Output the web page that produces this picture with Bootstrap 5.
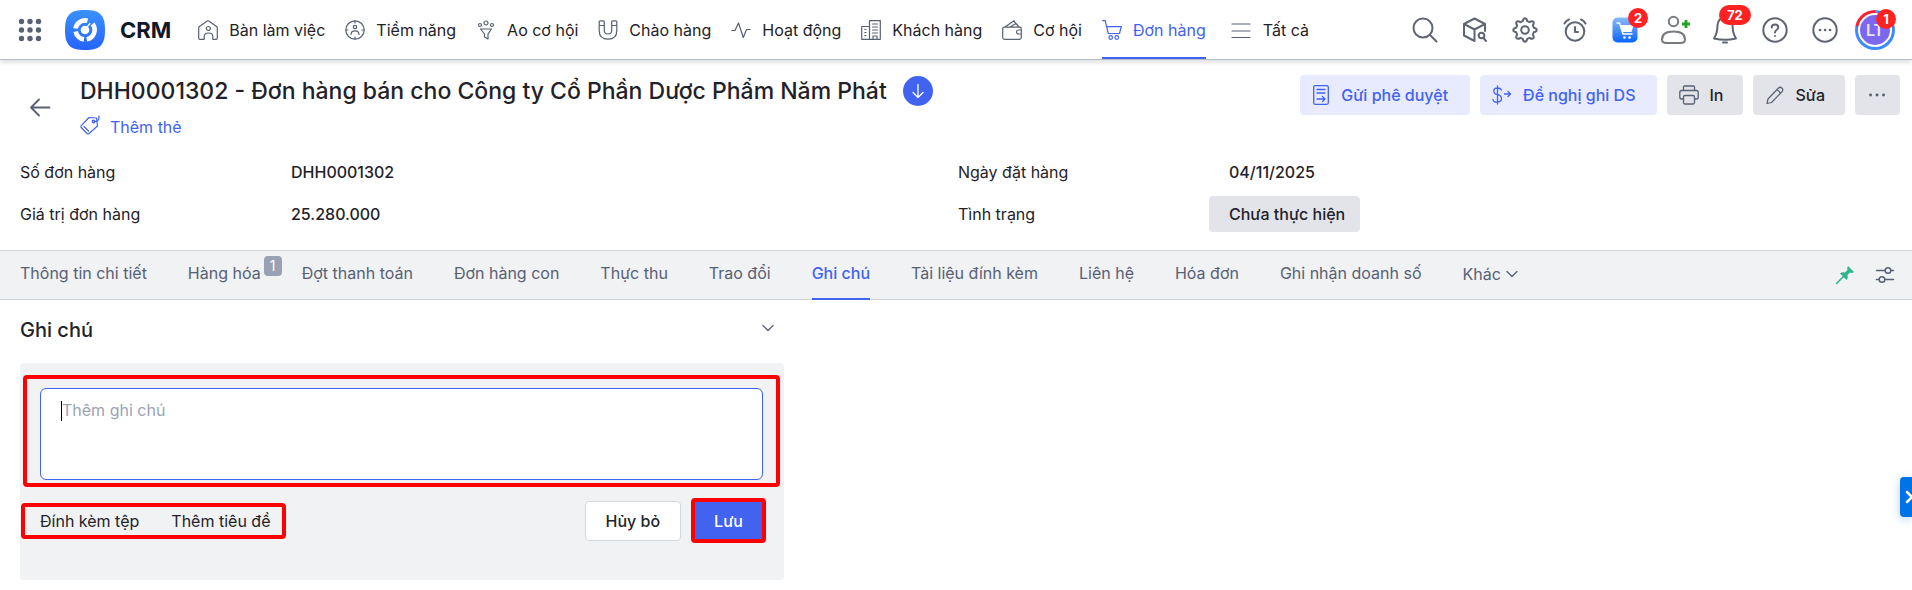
<!DOCTYPE html>
<html lang="vi">
<head>
<meta charset="utf-8">
<meta name="viewport" content="width=device-width, initial-scale=1">
<title>CRM - Đơn hàng</title>
<link href="https://cdn.jsdelivr.net/npm/bootstrap@5.3.0/dist/css/bootstrap.min.css" rel="stylesheet">
<style>
:root{--ink:#1f2229;--muted:#586074;--brand:#4262f0;--soft:#e7ebfd;--gray:#e2e4e9;--band:#f0f2f4}
body{font-family:Inter,"Noto Sans",sans-serif;font-size:16px;line-height:24px;color:var(--ink);background:#fff;overflow-x:hidden}
svg{display:block;flex:none;fill:none;stroke:currentColor;stroke-linecap:round;stroke-linejoin:round}
a{text-decoration:none;color:inherit}
.btn{--bs-btn-font-size:16px;--bs-btn-line-height:24px;--bs-btn-border-radius:4px}
.topbar{height:60px;border-bottom:1px solid #b9bccb;box-shadow:0 2px 5px rgba(60,65,85,.2)}
.app-menu{gap:23px;padding-left:18px}
.app-menu .btn{color:var(--muted)}
.brand-link{gap:15px}
.brand-name{font-size:22px;font-weight:700;line-height:28px;color:#111827}
.main-nav{gap:20px}
.main-nav .nav-link{display:flex;align-items:center;gap:11px;height:59px;padding:0;color:var(--ink);border-bottom:2px solid transparent;border-top:2px solid transparent;white-space:nowrap}
.main-nav svg{color:var(--muted);stroke-width:1.2}
.main-nav .active,.main-nav .active svg{color:var(--brand)}
.main-nav .active{border-bottom-color:var(--brand)}
.tools{gap:24px;color:#5f6573;padding-right:20px}
.tool{width:26px;height:26px;padding:0;border:0;background:none;color:inherit;position:relative;display:flex;align-items:center;justify-content:center}
.tool svg{stroke-width:2}
.count{position:absolute;height:20px;min-width:20px;border-radius:10px;background:#f22;color:#fff;font-size:13px;font-weight:700;line-height:20px;text-align:center}
.count-cart{left:16px;top:-9px}
.count-bell{left:7px;top:-12px}
.count-user{right:-1px;top:-1px}
.avatar{width:40px;height:40px;border-radius:50%;background:conic-gradient(#3d8bff 0 78%,#f5222d 78%);margin:0 -3px 0 -7px}
.avatar .face{width:34px;height:34px;border-radius:50%;border:2px solid #fff;background:#7b68ee;color:#e9e6ff;font-size:16px;font-weight:600;line-height:30px}
.order-head{padding:15px 12px 18px 20px}
.back-link{padding:0 8px;margin-right:20px;color:var(--muted)}
.order-title{font-size:23px;font-weight:500;line-height:32px}
.btn-round{width:30px;height:30px;background:var(--brand);color:#fff}
.brand-text{color:var(--brand);gap:10px}
.actions{gap:10px}
.actions .btn{height:40px;display:flex;align-items:center;gap:10px;padding:0 20px 0 12px;font-weight:500;white-space:nowrap;border:0}
.actions .btn-soft{background:var(--soft);color:var(--brand);gap:11px;padding-right:22px}
.btn-gray{background:var(--gray);color:var(--ink)}
.btn-gray svg{color:var(--muted)}
.actions .more{padding:0 13px 0 12px}
.fields{row-gap:6px;margin:15px 4px 0 0}
.field-row{height:36px}
.field-name{width:271px}
.field-value{font-weight:500}
.status-pill{background:var(--gray);border-radius:4px;padding:6px 15px 6px 20px;margin-left:-20px}
.tab-band{height:50px;background:var(--band);border-top:1px solid #d0d4dc;border-bottom:1px solid #d0d4dc;padding:0 17px 0 20px}
.tab-list{gap:41px;color:var(--muted)}
.tab-list .nav-link{padding:0;height:50px;line-height:46px;color:inherit;border-bottom:2px solid transparent;position:relative;white-space:nowrap}
.tab-list .active{color:var(--brand);border-bottom-color:var(--brand);font-weight:500}
.tab-count{position:absolute;left:100%;top:6px;margin-left:3px;width:18px;height:20px;border-radius:4px;background:#99a1b2;color:#fff;font-size:14px;line-height:20px;text-align:center}
.tab-tools{gap:20px;color:var(--muted)}
.tab-tools .btn{color:inherit}
.tab-tools .pin{color:#2fb58c}
.notes{width:41%;padding-left:20px}
.notes-head{padding:16px 9px 19px 0}
.notes-head .btn{color:var(--muted)}
.notes h2{font-size:20px;font-weight:500;line-height:28px}
.note-card{background:var(--band);border-radius:4px;padding:12px 4px 37px 1px}
.marked{border:4px solid #f00;border-radius:4px}
.note-box{padding:9px 13px 3px;margin-left:2px}
.note-box textarea{height:92px;resize:none;border:1px solid var(--brand);border-radius:6px;padding:9px 21px;font-size:16px;line-height:24px}
.note-box textarea::placeholder{color:#9ca3b4}
.caret{position:absolute;left:21px;top:13px;width:1px;height:20px;background:#000}
.note-actions{margin:11px 14px 0 0}
.note-links{padding:2px 12px 2px 15px;gap:32px;height:36px}
.note-links .btn{padding:0;border:0;color:var(--ink)}
.save-group{gap:10px}
.btn-cancel{height:40px;padding:0 20px;border:1px solid #d3d7de;background:#fff;font-weight:500}
.btn-save{height:37px;padding:0 19px;border:0;background:var(--brand);color:#fff;font-weight:500;border-radius:0}
.side-handle{position:fixed;right:0;top:477px;width:12px;height:40px;padding:0;border:0;border-radius:4px 0 0 4px;background:#0073e6;color:#fff;box-shadow:0 2px 10px rgba(0,115,230,.3);overflow:hidden}
</style>
</head>
<body>
<header class="topbar d-flex align-items-center justify-content-between">
  <div class="app-menu d-flex align-items-center">
    <button class="btn p-0 border-0" aria-label="Ứng dụng"><svg width="24" height="24" viewBox="0 0 24 24"><g fill="currentColor" stroke="none"><circle cx="3.500" cy="3.500" r="2.700"/><circle cx="12" cy="3.500" r="2.700"/><circle cx="20.500" cy="3.500" r="2.700"/><circle cx="3.500" cy="12" r="2.700"/><circle cx="12" cy="12" r="2.700"/><circle cx="20.500" cy="12" r="2.700"/><circle cx="3.500" cy="20.500" r="2.700"/><circle cx="12" cy="20.500" r="2.700"/><circle cx="20.500" cy="20.500" r="2.700"/></g></svg></button>
    <a href="#" class="brand-link d-flex align-items-center"><svg width="40" height="40" viewBox="0 0 40 40"><defs><linearGradient id="lg" x1="0" y1="0" x2="0" y2="1"><stop stop-color="#3a92ff"/><stop offset="1" stop-color="#2563ff"/></linearGradient></defs><path d="M20 0C35 0 40 5 40 20S35 40 20 40 0 35 0 20 5 0 20 0Z" fill="url(#lg)" stroke="none"/><g stroke="#fff" stroke-width="4.600" stroke-linecap="butt"><path d="M10.600 18.500A9.600 9.600 0 0 1 22.500 10.700"/><path d="M27.600 14A9.600 9.600 0 0 1 21.700 29.300"/><path d="M19 29.400A9.600 9.600 0 0 1 10.700 21.500"/></g><circle cx="20" cy="20" r="4.300" fill="#fff" stroke="none"/><path d="M22.500 16.500 25 13.500" stroke="#fff" stroke-width="1.200"/></svg><span class="brand-name">CRM</span></a>
    <nav class="nav main-nav ps-1 flex-nowrap">
      <a class="nav-link" href="#"><svg width="20" height="20" viewBox="0 0 20 20"><path d="M3.500 19.300H1.800Q.7 19.300.7 18V7.800Q.7 7 1.500 6.400L9.200 1Q10 .5 10.800 1L18.500 6.400Q19.300 7 19.300 7.800V18Q19.300 19.300 18.200 19.300H14.800V16.500Q14.800 13 10.500 13 6.200 13 6.200 16.500V19.300H3.500"/><circle cx="10.300" cy="8.500" r="2"/></svg>Bàn làm việc</a>
      <a class="nav-link" href="#"><svg width="20" height="20" viewBox="0 0 20 20"><circle cx="10" cy="10" r="9.200"/><circle cx="10" cy="7" r="1.700"/><path d="M6 14.500Q6 10.800 10 10.800T14 14.500M10 .8V3M10 17V19.200M.8 10H3M17 10H19.200"/></svg>Tiềm năng</a>
      <a class="nav-link" href="#"><svg width="20" height="20" viewBox="0 0 20 20"><circle cx="4" cy="5" r="1.500"/><circle cx="10" cy="3" r="2"/><circle cx="16" cy="5" r="1.500"/><path d="M4.500 9H15.500L12 14V19L8.500 17V14Z"/></svg>Ao cơ hội</a>
      <a class="nav-link" href="#"><svg width="20" height="20" viewBox="0 0 20 20"><path d="M1.200 1.800Q1.200.8 2.200.8H5.300Q6.300.8 6.300 1.800V10.500Q6.300 14 10 14T13.700 10.500V1.800Q13.700.8 14.700.8H17.800Q18.800.8 18.800 1.800V10.500Q18.800 19.200 10 19.200T1.200 10.500ZM1.200 5.500H6.300M13.700 5.500H18.800"/></svg>Chào hàng</a>
      <a class="nav-link" href="#"><svg width="20" height="20" viewBox="0 0 20 20"><path d="M.8 10.500H4L7.500 3 12.300 17.500 15.500 9.500H19.200"/></svg>Hoạt động</a>
      <a class="nav-link" href="#"><svg width="20" height="20" viewBox="0 0 20 20" ><path d="M8.500 19.300V.7H19.300V19.300H.7V6.500H8.500M3.800 9.500H5M3.800 12.500H5M3.800 15.500H5M11.500 4H16.500M11.500 7H16.500M11.500 10H16.500M11.500 13H16.500M12 19V16H16V19"/></svg>Khách hàng</a>
      <a class="nav-link" href="#"><svg width="20" height="20" viewBox="0 0 20 20"><path d="M16.500 7.200H2.500Q.7 7.200.7 9V17.500Q.7 19.300 2.500 19.300H17.500Q19.300 19.300 19.300 17.500V9Q19.300 7.200 17.500 7.200M19.300 10H16.500Q14.500 10 14.500 12T16.500 14H19.300M3 7 12 .8 14.500 4.500M8 7 14 3.500 17 7"/></svg>Cơ hội</a>
      <a class="nav-link active" href="#" aria-current="page"><svg width="20" height="20" viewBox="0 0 20 20"><path d="M.7.7H3.200L6.300 13.500H17.500L19.300 6.700H4.700"/><circle cx="8.700" cy="17.500" r="1.800"/><circle cx="14.800" cy="17.500" r="1.800"/></svg>Đơn hàng</a>
      <a class="nav-link ms-1" href="#"><svg width="22" height="20" viewBox="0 0 22 20"><path d="M2 4H20M2 11H20M2 17.500H20"/></svg>Tất cả</a>
    </nav>
  </div>
  <div class="tools d-flex align-items-center">
    <button class="tool" aria-label="Tìm kiếm"><svg width="26" height="26" viewBox="0 0 26 26"><circle cx="11" cy="11" r="9.500"/><path d="M18 18 24.500 24.500"/></svg></button>
    <button class="tool" aria-label="Sản phẩm"><svg width="26" height="26" viewBox="0 0 26 26"><path d="M12.500 24 2 18.500V7L12.500 1.500 23 7V14M2 7 12.500 12.500 23 7M12.500 12.500V24"/><circle cx="19.500" cy="18.500" r="2.800"/><path d="M21.500 21 24 24"/></svg></button>
    <button class="tool" aria-label="Thiết lập"><svg width="26" height="26" viewBox="0 0 26 26"><path d="M10.700 4.200Q11.300 1.300 13 1.300T15.300 4.200L17.600 5.200Q20.100 3.500 21.300 4.700T20.800 8.400L21.800 10.700Q24.700 11.300 24.700 13T21.800 15.300L20.800 17.600Q22.500 20.100 21.300 21.300T17.600 20.800L15.300 21.800Q14.700 24.700 13 24.700T10.700 21.800L8.400 20.800Q5.900 22.500 4.700 21.300T5.200 17.600L4.200 15.300Q1.300 14.700 1.300 13T4.200 10.700L5.200 8.400Q3.500 5.900 4.700 4.700T8.400 5.200Z"/><circle cx="13" cy="13" r="3.800"/></svg></button>
    <button class="tool" aria-label="Nhắc nhở"><svg width="26" height="26" viewBox="0 0 26 26"><circle cx="13" cy="14.500" r="9.300"/><path d="M13 10V15H16M2.500 6.500Q4 3.500 7 2.500M23.500 6.500Q22 3.500 19 2.500"/></svg></button>
    <button class="tool" aria-label="Giỏ hàng"><svg width="26" height="26" viewBox="0 0 26 26"><defs><linearGradient id="cg" x1="0" y1="0" x2="0" y2="1"><stop stop-color="#8abaff"/><stop offset="1" stop-color="#0a64fa"/></linearGradient></defs><rect x=".5" y=".5" width="25" height="25" rx="5" fill="url(#cg)" stroke="none"/><path d="M5 6H7.500L11 17H20" stroke="#fff" stroke-width="1.500"/><path d="M8.500 8H21.500L19.500 15H10.500Z" fill="#fff" stroke="none"/><circle cx="12.500" cy="20.500" r="1.300" fill="#fff" stroke="none"/><circle cx="17.500" cy="20.500" r="1.300" fill="#fff" stroke="none"/></svg><span class="count count-cart">2</span></button>
    <button class="tool" aria-label="Thêm người dùng"><svg width="30" height="30" viewBox="-1 0 30 30"><g stroke="#777b80"><circle cx="12.500" cy="6.500" r="4.700"/><path d="M5.500 28Q1 28 1 24.500 1 16.500 12.500 16.500T24 24.500Q24 28 19.500 28Z"/></g><path d="M25 5V13M21 9H29" stroke="#22a51e" stroke-width="2.800" stroke-linecap="butt"/></svg></button>
    <button class="tool" aria-label="Thông báo"><svg width="26" height="28" viewBox="0 0 26 28"><path d="M13 2Q6 2 5.500 9 5.500 17 2 22.500 13 25 24 22.500 20.500 17 20.500 9 20 2 13 2Z"/><path d="M11 26.500H15"/></svg><span class="count count-bell px-2">72</span></button>
    <button class="tool" aria-label="Trợ giúp"><svg width="26" height="26" viewBox="0 0 26 26"><circle cx="13" cy="13" r="11.700"/><path d="M9.700 10.500Q9.700 7.500 13 7.500T16.300 10.300Q16.300 12 14.500 13 13 13.800 13 15.500M13 19V19.100"/></svg></button>
    <button class="tool" aria-label="Thêm"><svg width="26" height="26" viewBox="0 0 26 26"><circle cx="13" cy="13" r="11.700"/><path d="M8 13H8.100M13 13H13.100M18 13H18.100" stroke-width="2.600"/></svg></button>
    <button class="tool avatar" aria-label="Tài khoản"><span class="face">LT</span><span class="count count-user">1</span></button>
  </div>
</header>

<main>
  <section class="order-head">
    <div class="d-flex justify-content-between align-items-start">
      <div class="d-flex">
        <a href="#" class="back-link align-self-center" aria-label="Quay lại"><svg width="24" height="24" viewBox="0 0 24 24" stroke-width="1.800"><path d="M21.500 12.500H3M11 4.500 3 12.500 11 20.500"/></svg></a>
        <div>
          <div class="d-flex align-items-center gap-3"><h1 class="order-title m-0">DHH0001302 - Đơn hàng bán cho Công ty Cổ Phần Dược Phẩm Năm Phát</h1>
            <button class="btn btn-round rounded-circle p-0 border-0 d-flex align-items-center justify-content-center" aria-label="Xem thêm"><svg width="16" height="16" viewBox="0 0 16 16" stroke-width="1.300"><path d="M8 1.500V14.500M3 9.500 8 14.500 13 9.500"/></svg></button></div>
          <a href="#" class="brand-text d-flex mt-2"><svg width="20" height="20" viewBox="0 0 20 20" stroke-width="1.200"><path d="M9 2.500 16.500 3 17.500 11 9 18.500Q8 19.300 7 18.500L1.200 12.500Q.5 11.500 1.300 10.700Z"/><circle cx="13.500" cy="6.500" r="1.300"/><path d="M14 6.500Q19.500 7 19 1M4 11.500 8.500 16"/></svg>Thêm thẻ</a>
        </div>
      </div>
      <div class="actions d-flex">
        <button class="btn btn-soft"><svg width="18" height="20" viewBox="0 0 18 20" stroke-width="1.300"><rect x="1.700" y=".7" width="14.600" height="18.600" rx="1.500"/><path d="M5 4.500H13M5 8H13M5 14H13M10.500 11.500 13 14 10.500 16.500"/></svg>Gửi phê duyệt</button>
        <button class="btn btn-soft"><svg width="20" height="20" viewBox="0 0 20 20" stroke-width="1.300"><path d="M9.500 5Q8.500 3 5.500 3 1.800 3 1.800 6T5.500 9.700 9.500 13.500 5.500 17 1 14.500M5.500 1V19M12.500 9H18.500M16 6.500 18.500 9 16 11.500"/></svg>Đề nghị ghi DS</button>
        <button class="btn btn-gray"><svg width="20" height="20" viewBox="0 0 20 20" stroke-width="1.300"><path d="M4.500 5V2Q4.500 1 5.500 1H14.500Q15.500 1 15.500 2V5M4.500 14H2.500Q.8 14 .8 12V7.500Q.8 5.500 2.500 5.500H17.500Q19.200 5.500 19.200 7.500V12Q19.200 14 17.500 14H15.500"/><rect x="4.500" y="10.500" width="11" height="8.500" rx="1.500"/></svg>In</button>
        <button class="btn btn-gray"><svg width="20" height="20" viewBox="0 0 20 20" stroke-width="1.200"><path d="M2 18.500 3 14 13.500 3Q15 1.500 16.800 3T17.200 6.500L6.500 17.500ZM12 4.500 15.500 8"/></svg>Sửa</button>
        <button class="btn btn-gray more" aria-label="Thao tác khác"><svg width="20" height="20" viewBox="0 0 20 20"><path d="M3.500 10H3.600M10 10H10.100M16.500 10H16.600" stroke-width="2.800"/></svg></button>
      </div>
    </div>
    <div class="fields row gx-0">
      <div class="field-row col-6 d-flex align-items-center"><span class="field-name">Số đơn hàng</span><span class="field-value">DHH0001302</span></div>
      <div class="field-row col-6 d-flex align-items-center"><span class="field-name">Ngày đặt hàng</span><span class="field-value">04/11/2025</span></div>
      <div class="field-row col-6 d-flex align-items-center"><span class="field-name">Giá trị đơn hàng</span><span class="field-value">25.280.000</span></div>
      <div class="field-row col-6 d-flex align-items-center"><span class="field-name">Tình trạng</span><span class="field-value status-pill">Chưa thực hiện</span></div>
    </div>
  </section>

  <div class="tab-band d-flex align-items-center justify-content-between">
    <nav class="nav tab-list flex-nowrap">
      <a class="nav-link" href="#">Thông tin chi tiết</a>
      <a class="nav-link" href="#">Hàng hóa<span class="tab-count">1</span></a>
      <a class="nav-link" href="#">Đợt thanh toán</a>
      <a class="nav-link" href="#">Đơn hàng con</a>
      <a class="nav-link" href="#">Thực thu</a>
      <a class="nav-link" href="#">Trao đổi</a>
      <a class="nav-link active" href="#" aria-current="page">Ghi chú</a>
      <a class="nav-link" href="#">Tài liệu đính kèm</a>
      <a class="nav-link" href="#">Liên hệ</a>
      <a class="nav-link" href="#">Hóa đơn</a>
      <a class="nav-link" href="#">Ghi nhận doanh số</a>
      <a class="nav-link d-flex align-items-center gap-1" href="#">Khác<svg width="14" height="14" viewBox="0 0 14 14" stroke-width="1.300"><path d="M2 4.500 7 9.500 12 4.500"/></svg></a>
    </nav>
    <div class="tab-tools d-flex align-items-center">
      <button class="btn pin p-0 border-0" aria-label="Ghim"><svg width="20" height="20" viewBox="0 0 20 20"><path d="M13 1 19 7Q17 8.500 15 7.500L12.500 10Q13.500 13 11.500 15L5 8.500Q7 6.500 10 7.500L12.500 5Q11.500 3 13 1Z" fill="currentColor" stroke="none"/><path d="M8.500 11.500 1.500 18.500" stroke-width="1.500"/></svg></button>
      <button class="btn p-0 border-0" aria-label="Tùy chỉnh"><svg width="20" height="20" viewBox="0 0 20 20" stroke-width="1.500"><path d="M1.500 5.500H10M16 5.500H18.500M1.500 14.500H4M10 14.500H18.500"/><circle cx="13" cy="5.500" r="2.800"/><circle cx="7" cy="14.500" r="2.800"/></svg></button>
    </div>
  </div>

  <section class="notes">
    <div class="notes-head d-flex justify-content-between align-items-center">
      <h2 class="m-0">Ghi chú</h2>
      <button class="btn p-0 border-0" aria-label="Thu gọn"><svg width="14" height="14" viewBox="0 0 14 14" stroke-width="1.300"><path d="M2 2.500 7 7.500 12 2.500"/></svg></button>
    </div>
    <form class="note-card">
      <div class="marked note-box"><div class="position-relative"><textarea class="form-control d-block" aria-label="Ghi chú" placeholder="Thêm ghi chú"></textarea><span class="caret"></span></div></div>
      <div class="note-actions d-flex justify-content-between align-items-center">
        <div class="marked note-links d-flex align-items-center"><button type="button" class="btn">Đính kèm tệp</button><button type="button" class="btn">Thêm tiêu đề</button></div>
        <div class="save-group d-flex align-items-center"><button type="button" class="btn btn-cancel">Hủy bỏ</button><div class="marked"><button type="submit" class="btn btn-save d-block">Lưu</button></div></div>
      </div>
    </form>
  </section>
</main>
<button class="side-handle" aria-label="Mở bảng bên"><svg width="20" height="40" viewBox="0 0 20 40" stroke-width="2.500"><path d="M7 15 12 20 7 25M17 15 12 20 17 25"/></svg></button>
</body>
</html>
